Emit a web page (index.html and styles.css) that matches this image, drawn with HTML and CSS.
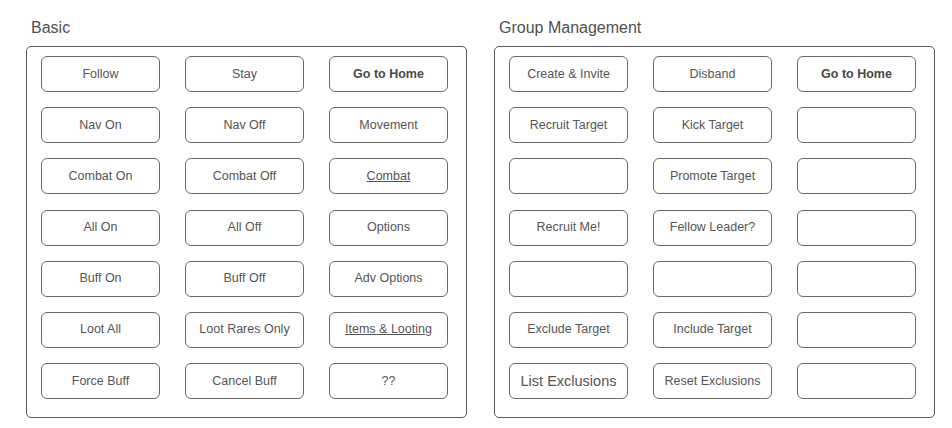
FILE: index.html
```html
<!DOCTYPE html>
<html>
<head>
<meta charset="utf-8">
<link rel="stylesheet" href="styles.css">
</head>
<body>
<div class="page">
  <section class="group">
    <h2 class="title">Basic</h2>
    <div class="panel">
      <div class="btn">Follow</div>
      <div class="btn">Stay</div>
      <div class="btn bold">Go to Home</div>
      <div class="btn">Nav On</div>
      <div class="btn">Nav Off</div>
      <div class="btn">Movement</div>
      <div class="btn">Combat On</div>
      <div class="btn">Combat Off</div>
      <div class="btn link">Combat</div>
      <div class="btn">All On</div>
      <div class="btn">All Off</div>
      <div class="btn">Options</div>
      <div class="btn">Buff On</div>
      <div class="btn">Buff Off</div>
      <div class="btn">Adv Options</div>
      <div class="btn">Loot All</div>
      <div class="btn">Loot Rares Only</div>
      <div class="btn link">Items &amp; Looting</div>
      <div class="btn">Force Buff</div>
      <div class="btn">Cancel Buff</div>
      <div class="btn">??</div>
    </div>
  </section>
  <section class="group">
    <h2 class="title">Group Management</h2>
    <div class="panel">
      <div class="btn">Create &amp; Invite</div>
      <div class="btn">Disband</div>
      <div class="btn bold">Go to Home</div>
      <div class="btn">Recruit Target</div>
      <div class="btn">Kick Target</div>
      <div class="btn"></div>
      <div class="btn"></div>
      <div class="btn">Promote Target</div>
      <div class="btn"></div>
      <div class="btn">Recruit Me!</div>
      <div class="btn">Fellow Leader?</div>
      <div class="btn"></div>
      <div class="btn"></div>
      <div class="btn"></div>
      <div class="btn"></div>
      <div class="btn">Exclude Target</div>
      <div class="btn">Include Target</div>
      <div class="btn"></div>
      <div class="btn big">List Exclusions</div>
      <div class="btn">Reset Exclusions</div>
      <div class="btn"></div>
    </div>
  </section>
</div>
</body>
</html>
```

FILE: styles.css
```css
html, body {
  margin: 0;
  padding: 0;
  background: #ffffff;
}
body {
  font-family: "Liberation Sans", Arial, sans-serif;
  color: #555;
}
.page {
  display: flex;
  gap: 27px;
  padding-left: 26px;
}
.group {
  width: 441px;
}
.title {
  margin: 19px 0 9px 5px;
  font-size: 16px;
  line-height: 18px;
  font-weight: normal;
  color: #505050;
}
.panel {
  box-sizing: border-box;
  width: 441px;
  height: 372px;
  border: 1px solid #5a5a5a;
  border-radius: 5px;
  padding: 9px 0 0 14px;
  display: grid;
  grid-template-columns: repeat(3, 119px);
  grid-auto-rows: 36px;
  column-gap: 25px;
  row-gap: 15.2px;
  align-content: start;
}
.btn {
  box-sizing: border-box;
  border: 1px solid #6a6a6a;
  border-radius: 6px;
  display: flex;
  align-items: center;
  justify-content: center;
  padding-bottom: 1px;
  font-size: 12.5px;
  color: #555;
  white-space: nowrap;
}
.bold {
  font-weight: bold;
  color: #4a4a4a;
}
.link {
  text-decoration: underline;
}
.big {
  font-size: 14.5px;
}
```
